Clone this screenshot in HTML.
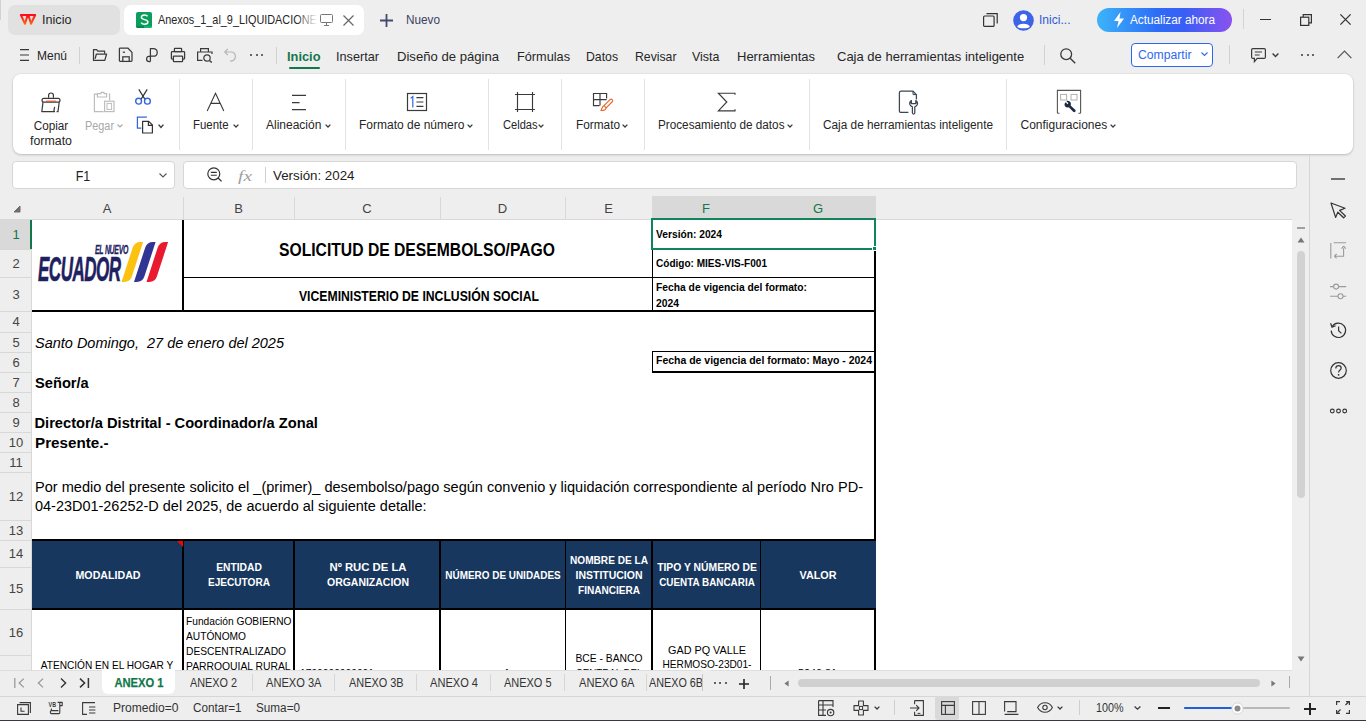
<!DOCTYPE html>
<html><head><meta charset="utf-8">
<style>
*{box-sizing:border-box;margin:0;padding:0}
html,body{width:1366px;height:721px;overflow:hidden;background:#eeeeee;font-family:"Liberation Sans",sans-serif;color:#262626;position:relative}
.a{position:absolute}
.t{position:absolute;white-space:pre;line-height:1}
svg{position:absolute;overflow:visible}
</style></head><body>
<div class="a" style="left:0px;top:0px;width:1px;height:20px;background:#d2d2d2;"></div>
<div class="a" style="left:8px;top:5px;width:112px;height:30px;background:#e1e1e1;border-radius:7px"></div>
<div class="a" style="left:124px;top:5px;width:240px;height:30px;background:#ffffff;border-radius:7px"></div>
<svg style="left:19px;top:13px;" width="18" height="13" viewBox="0 0 18 13"><defs><linearGradient id="wg" x1="0" y1="0" x2="0" y2="1"><stop offset="0" stop-color="#ff0a1e"/><stop offset="1" stop-color="#ff6210"/></linearGradient></defs><path d="M1.9 2 H8.6 L6 10.8 Z M9.4 2 H16.2 L12 10.8 Z" fill="none" stroke="url(#wg)" stroke-width="2" stroke-linejoin="round"/></svg>
<div class="t" id="t0" style="top:13.00px;font:normal normal 13px 'Liberation Sans';line-height:1;color:#262626;left:42px;transform:scaleX(0.9721);transform-origin:left top;">Inicio</div>
<div class="a" style="left:136px;top:12px;width:16px;height:16px;background:#0b9d5c;border-radius:2px;overflow:hidden"></div>
<div class="a" style="left:136px;top:26px;width:8px;height:2px;background:#07874b;border-radius:0 0 0 2px"></div>
<div class="a" style="left:144px;top:26px;width:8px;height:2px;background:#13b56a;border-radius:0 0 2px 0"></div>
<svg style="left:140px;top:14px;" width="9" height="11" viewBox="0 0 9 11"><path d="M7.6 2.2 C6.8 1.2 5.8 0.9 4.5 0.9 C2.6 0.9 1.4 1.9 1.4 3.2 C1.4 6.2 7.9 5 7.9 8 C7.9 9.5 6.5 10.2 4.6 10.2 C3 10.2 1.8 9.6 1.1 8.6" fill="none" stroke="#fff" stroke-width="1.5"/></svg>
<div class="t" id="t1" style="top:13.00px;font:normal normal 13px 'Liberation Sans';line-height:1;color:#262626;left:158px;transform:scaleX(0.8354);transform-origin:left top;">Anexos_1_al_9_LIQUIDACIONES</div>
<div class="a" style="left:296px;top:8px;width:24px;height:24px;background:linear-gradient(90deg,rgba(255,255,255,0),#fff 90%);"></div>
<div class="a" style="left:320px;top:8px;width:40px;height:24px;background:#fff;"></div>
<svg style="left:320px;top:14px;" width="13" height="12" viewBox="0 0 13 12"><rect x="0.5" y="0.5" width="12" height="8" rx="1" fill="none" stroke="#777" stroke-width="1"/><path d="M4 11.5 H9 M6.5 9 V11.5" stroke="#777" stroke-width="1"/></svg>
<svg style="left:343px;top:15px;" width="11" height="11" viewBox="0 0 11 11"><path d="M0.5 0.5 L10.5 10.5 M10.5 0.5 L0.5 10.5" stroke="#666" stroke-width="1.2"/></svg>
<svg style="left:380px;top:14px;" width="13" height="13" viewBox="0 0 13 13"><path d="M6.5 0 V13 M0 6.5 H13" stroke="#444b6a" stroke-width="1.8"/></svg>
<div class="t" id="t2" style="top:14.01px;font:normal normal 12.5px 'Liberation Sans';line-height:1;color:#3b4263;left:406px;transform:scaleX(0.9410);transform-origin:left top;">Nuevo</div>
<svg style="left:983px;top:13px;" width="15" height="14" viewBox="0 0 15 14"><rect x="0.6" y="3" width="10.5" height="10.4" rx="1" fill="none" stroke="#333" stroke-width="1.2"/><path d="M3.5 0.6 H14.2 V10.6" fill="none" stroke="#333" stroke-width="1.2"/></svg>
<svg style="left:1013px;top:10px;" width="21" height="21" viewBox="0 0 21 21"><circle cx="10.5" cy="10.5" r="10.3" fill="#3d63e6"/><circle cx="10.5" cy="7.6" r="3.6" fill="#fff"/><path d="M4.2 16.8 C5 12.6 16 12.6 16.8 16.8 C15 18.8 6 18.8 4.2 16.8Z" fill="#fff"/></svg>
<div class="t" id="t3" style="top:13.00px;font:normal normal 13px 'Liberation Sans';line-height:1;color:#3159d6;left:1039px;transform:scaleX(0.9277);transform-origin:left top;">Inici...</div>
<div class="a" style="left:1097px;top:8px;width:135px;height:24px;background:linear-gradient(90deg,#3cb4fa 0%,#2d6cf6 45%,#3a5ef5 65%,#8b52f0 100%);border-radius:12px"></div>
<svg style="left:1113px;top:12px;" width="12" height="16" viewBox="0 0 12 16"><path d="M7.5 0 L1 9 H5.5 L4 16 L11 6.5 H6.5 Z" fill="#fff"/></svg>
<div class="t" id="t4" style="top:14.01px;font:normal normal 12.5px 'Liberation Sans';line-height:1;color:#ffffff;left:1130px;transform:scaleX(0.9410);transform-origin:left top;">Actualizar ahora</div>
<div class="a" style="left:1243px;top:9px;width:1px;height:20px;background:#d4d4d4;"></div>
<div class="a" style="left:1260px;top:19px;width:11px;height:1.2px;background:#333;"></div>
<svg style="left:1300px;top:14px;" width="12" height="12" viewBox="0 0 12 12"><rect x="0.6" y="3.2" width="8.2" height="8.2" fill="none" stroke="#333" stroke-width="1.2"/><path d="M3.2 3.2 V0.6 H11.4 V8.8 H8.8" fill="none" stroke="#333" stroke-width="1.2"/></svg>
<svg style="left:1340px;top:14px;" width="11" height="11" viewBox="0 0 11 11"><path d="M0.4 0.4 L10.6 10.6 M10.6 0.4 L0.4 10.6" stroke="#333" stroke-width="1.3"/></svg>
<svg style="left:20px;top:49px;" width="9" height="12" viewBox="0 0 9 12"><path d="M0 0.6 H9 M0 6 H9 M0 11.4 H9" stroke="#3a3a3a" stroke-width="1.2"/></svg>
<div class="t" id="t5" style="top:49.00px;font:normal normal 13px 'Liberation Sans';line-height:1;color:#262626;left:37px;transform:scaleX(0.9225);transform-origin:left top;">Menú</div>
<div class="a" style="left:79px;top:47px;width:1px;height:17px;background:#d2d2d2;"></div>
<svg style="left:92px;top:48px;" width="16" height="14" viewBox="0 0 16 14"><path d="M1.5 12.4 V1.5 H4.6 L5.8 3.2 H12.6 V4.8 M1.5 12.4 H12.8 L14.6 6 H4.4 L3.2 10.4" fill="none" stroke="#3a3a3a" stroke-width="1.25" stroke-linejoin="round" stroke-linecap="round"/></svg>
<svg style="left:118px;top:47px;" width="16" height="16" viewBox="0 0 16 16"><path d="M5 14.4 H2.2 C1.6 14.4 1.4 14.2 1.4 13.6 V1.8 C1.4 1.3 1.6 1 2.2 1 H9.8 L14 5.4 V13.6 C14 14.2 13.8 14.4 13.2 14.4 H10.8" fill="none" stroke="#3a3a3a" stroke-width="1.25" stroke-linejoin="round"/><path d="M4.8 5.2 H7" stroke="#3a3a3a" stroke-width="1.25"/><rect x="4.8" y="9.8" width="6.4" height="4.6" fill="none" stroke="#3a3a3a" stroke-width="1.25"/></svg>
<svg style="left:145px;top:47px;" width="14" height="16" viewBox="0 0 14 16"><path d="M5.4 14.6 V1.5 H8.2 C10.6 1.5 12.2 3.2 12.2 5.4 C12.2 7.6 10.6 9.2 8.2 9.2 H5.6 C3.2 9.2 1.6 10.4 1.6 12 C1.6 13.6 2.8 14.6 4.2 14.6 H5.4" fill="none" stroke="#3a3a3a" stroke-width="1.25" stroke-linejoin="round"/></svg>
<svg style="left:170px;top:47px;" width="16" height="16" viewBox="0 0 16 16"><rect x="4.4" y="1.4" width="7.2" height="3.2" rx="0.6" fill="none" stroke="#3a3a3a" stroke-width="1.25"/><path d="M3.2 12 H2.2 C1.7 12 1.4 11.7 1.4 11.2 V5.4 C1.4 4.9 1.7 4.6 2.2 4.6 H13.8 C14.3 4.6 14.6 4.9 14.6 5.4 V11.2 C14.6 11.7 14.3 12 13.8 12 H12.8" fill="none" stroke="#3a3a3a" stroke-width="1.25"/><rect x="3.4" y="9" width="9.2" height="5.6" rx="0.6" fill="none" stroke="#3a3a3a" stroke-width="1.25"/></svg>
<svg style="left:197px;top:48px;" width="16" height="15" viewBox="0 0 16 15"><path d="M3.6 4 V0.6 H11.4 V4" fill="none" stroke="#3a3a3a" stroke-width="1.2"/><path d="M5.5 12.4 H0.6 V4 H15 V6" fill="none" stroke="#3a3a3a" stroke-width="1.2"/><circle cx="10" cy="10" r="3.2" fill="none" stroke="#3a3a3a" stroke-width="1.2"/><path d="M12.4 12.4 L14.8 14.6" stroke="#3a3a3a" stroke-width="1.3"/></svg>
<svg style="left:224px;top:48px;" width="12" height="14" viewBox="0 0 12 14"><path d="M3.8 0.8 L0.8 4 L3.8 7.2 M0.9 4 H6.5 C9.8 4 11.4 6 11.4 8.6 C11.4 11.4 9 13.2 6 13.2" fill="none" stroke="#b5b5b5" stroke-width="1.2"/></svg>
<div class="a" style="left:250px;top:54px;width:2px;height:2px;background:#3a3a3a;border-radius:1px"></div>
<div class="a" style="left:255.5px;top:54px;width:2px;height:2px;background:#3a3a3a;border-radius:1px"></div>
<div class="a" style="left:261px;top:54px;width:2px;height:2px;background:#3a3a3a;border-radius:1px"></div>
<div class="a" style="left:276px;top:47px;width:1px;height:17px;background:#d2d2d2;"></div>
<div class="t" id="t6" style="top:50.00px;font:normal bold 13px 'Liberation Sans';line-height:1;color:#12774a;left:287px;transform:scaleX(0.9868);transform-origin:left top;">Inicio</div>
<div class="t" id="t7" style="top:50.00px;font:normal normal 13px 'Liberation Sans';line-height:1;color:#262626;left:336px;transform:scaleX(0.9757);transform-origin:left top;">Insertar</div>
<div class="t" id="t8" style="top:50.00px;font:normal normal 13px 'Liberation Sans';line-height:1;color:#262626;left:397px;transform:scaleX(1.0080);transform-origin:left top;">Diseño de página</div>
<div class="t" id="t9" style="top:50.00px;font:normal normal 13px 'Liberation Sans';line-height:1;color:#262626;left:517px;transform:scaleX(0.9783);transform-origin:left top;">Fórmulas</div>
<div class="t" id="t10" style="top:50.00px;font:normal normal 13px 'Liberation Sans';line-height:1;color:#262626;left:586px;transform:scaleX(0.9423);transform-origin:left top;">Datos</div>
<div class="t" id="t11" style="top:50.00px;font:normal normal 13px 'Liberation Sans';line-height:1;color:#262626;left:634.5px;transform:scaleX(0.9418);transform-origin:left top;">Revisar</div>
<div class="t" id="t12" style="top:50.00px;font:normal normal 13px 'Liberation Sans';line-height:1;color:#262626;left:692px;transform:scaleX(0.9593);transform-origin:left top;">Vista</div>
<div class="t" id="t13" style="top:50.00px;font:normal normal 13px 'Liberation Sans';line-height:1;color:#262626;left:737px;">Herramientas</div>
<div class="t" id="t14" style="top:50.00px;font:normal normal 13px 'Liberation Sans';line-height:1;color:#262626;left:837px;">Caja de herramientas inteligente</div>
<div class="a" style="left:289px;top:67px;width:31px;height:2px;background:#12774a;border-radius:1px"></div>
<div class="a" style="left:1044px;top:45px;width:1px;height:20px;background:#d2d2d2;"></div>
<svg style="left:1060px;top:48px;" width="16" height="16" viewBox="0 0 16 16"><circle cx="6.2" cy="6.2" r="5.4" fill="none" stroke="#3a3a3a" stroke-width="1.3"/><path d="M10.2 10.2 L15.2 15.2" stroke="#3a3a3a" stroke-width="1.4"/></svg>
<div class="a" style="left:1131px;top:43px;width:82px;height:24px;background:#ffffff;border:1.2px solid #2f68ec;border-radius:4px"></div>
<div class="t" id="t15" style="top:49.01px;font:normal normal 12.5px 'Liberation Sans';line-height:1;color:#2f68ec;left:1137.5px;transform:scaleX(0.9750);transform-origin:left top;">Compartir</div>
<svg style="left:1201px;top:52px;" width="7" height="5" viewBox="0 0 7 5"><path d="M0.5 0.5 L3.5 3.5 L6.5 0.5" fill="none" stroke="#2f68ec" stroke-width="1.1"/></svg>
<div class="a" style="left:1229px;top:45px;width:1px;height:19px;background:#d2d2d2;"></div>
<svg style="left:1251px;top:48px;" width="15" height="15" viewBox="0 0 15 15"><path d="M1.8 0.6 H13.2 C13.9 0.6 14.4 1.1 14.4 1.8 V9.2 C14.4 9.9 13.9 10.4 13.2 10.4 H6.2 L3.4 13.6 V10.4 H1.8 C1.1 10.4 0.6 9.9 0.6 9.2 V1.8 C0.6 1.1 1.1 0.6 1.8 0.6Z" fill="none" stroke="#3a3a3a" stroke-width="1.2"/><path d="M3.8 4 H11 M3.8 7 H8.6" stroke="#3a3a3a" stroke-width="1.2"/></svg>
<svg style="left:1272px;top:53px;" width="7" height="5" viewBox="0 0 7 5"><path d="M0.6 0.6 L3.5 3.6 L6.4 0.6" fill="none" stroke="#3a3a3a" stroke-width="1.4"/></svg>
<div class="a" style="left:1301px;top:54px;width:2px;height:2px;background:#3a3a3a;border-radius:1px"></div>
<div class="a" style="left:1306.5px;top:54px;width:2px;height:2px;background:#3a3a3a;border-radius:1px"></div>
<div class="a" style="left:1312px;top:54px;width:2px;height:2px;background:#3a3a3a;border-radius:1px"></div>
<svg style="left:1337px;top:50px;" width="15" height="9" viewBox="0 0 15 9"><path d="M0.6 8.2 L7.5 1 L14.4 8.2" fill="none" stroke="#555" stroke-width="1.2"/></svg>
<div class="a" style="left:13px;top:74px;width:1340px;height:80px;background:#ffffff;border-radius:8px;box-shadow:0 1px 2.5px rgba(0,0,0,.20), 0 0 0 0.5px rgba(0,0,0,.05)"></div>
<div class="a" style="left:179px;top:79px;width:1px;height:71px;background:#e3e3e3;"></div>
<div class="a" style="left:252px;top:79px;width:1px;height:71px;background:#e3e3e3;"></div>
<div class="a" style="left:345px;top:79px;width:1px;height:71px;background:#e3e3e3;"></div>
<div class="a" style="left:488px;top:79px;width:1px;height:71px;background:#e3e3e3;"></div>
<div class="a" style="left:561px;top:79px;width:1px;height:71px;background:#e3e3e3;"></div>
<div class="a" style="left:644px;top:79px;width:1px;height:71px;background:#e3e3e3;"></div>
<div class="a" style="left:809px;top:79px;width:1px;height:71px;background:#e3e3e3;"></div>
<div class="a" style="left:1006px;top:79px;width:1px;height:71px;background:#e3e3e3;"></div>
<svg style="left:40px;top:91px;" width="22" height="22" viewBox="0 0 22 22"><path d="M8.6 6.8 V4.2 C8.6 3.2 9.4 2 11 2 C12.6 2 13.4 3.2 13.4 4.2 V6.8" fill="none" stroke="#3a3a3a" stroke-width="1.2"/><rect x="2" y="7.4" width="18" height="3.8" rx="1.9" fill="#fff" stroke="#3a3a3a" stroke-width="1.2"/><path d="M6 10.2 H16" stroke="#e4572e" stroke-width="1.2"/><path d="M3 11.2 L1.8 20.6 H15 M19.2 11.2 L18 20.6 H16.6 M14.6 15.8 L13.8 20.6" fill="none" stroke="#3a3a3a" stroke-width="1.2" stroke-linejoin="round"/></svg>
<svg style="left:93px;top:91px;" width="23" height="22" viewBox="0 0 23 22"><path d="M4.2 3.2 H1.4 V20.6 H10.6 M15.8 3.2 H16.6 V9.6" fill="none" stroke="#bdbdbd" stroke-width="1.2"/><path d="M4.4 6 V2.6 H8 V1.4 H11 V2.6 H13.6 V6 Z" fill="none" stroke="#bdbdbd" stroke-width="1.2" stroke-linejoin="round"/><rect x="11.6" y="10.2" width="9.4" height="10.4" fill="none" stroke="#bdbdbd" stroke-width="1.2"/><rect x="14" y="12.4" width="4.6" height="6" fill="none" stroke="#bdbdbd" stroke-width="1"/></svg>
<div class="t" id="t16" style="top:120.01px;font:normal normal 12px 'Liberation Sans';line-height:1;color:#262626;left:-549.5px;width:1200px;text-align:center;transform:scaleX(0.9760);transform-origin:center top;">Copiar</div>
<div class="t" id="t17" style="top:135.01px;font:normal normal 12px 'Liberation Sans';line-height:1;color:#262626;left:-549.5px;width:1200px;text-align:center;transform:scaleX(1.0324);transform-origin:center top;">formato</div>
<div class="t" id="t18" style="top:120.01px;font:normal normal 12px 'Liberation Sans';line-height:1;color:#a8a8a8;left:84.5px;transform:scaleX(0.9056);transform-origin:left top;">Pegar</div>
<svg style="left:117px;top:124px;" width="6" height="4" viewBox="0 0 6 4"><path d="M0.5 0.5 L3 3 L5.5 0.5" fill="none" stroke="#a8a8a8" stroke-width="1.1"/></svg>
<svg style="left:134px;top:89px;" width="18" height="16" viewBox="0 0 18 16"><path d="M4.8 0.4 L11 10.4 M13.2 0.4 L7 10.4" stroke="#333" stroke-width="1.2"/><circle cx="4.6" cy="12.2" r="2.9" fill="none" stroke="#3366e0" stroke-width="1.4"/><circle cx="13.4" cy="12.2" r="2.9" fill="none" stroke="#3366e0" stroke-width="1.4"/></svg>
<svg style="left:136px;top:116px;" width="18" height="18" viewBox="0 0 18 18"><path d="M10.4 1.6 V1 H1.4 V12 H5.4" fill="none" stroke="#3366e0" stroke-width="1.25"/><path d="M6.6 5.4 H12.8 L16.4 9 V17 H6.6 Z" fill="#fff" stroke="#333" stroke-width="1.2" stroke-linejoin="round"/><path d="M12.4 5.4 V9.4 H16.4" fill="none" stroke="#333" stroke-width="1.2"/></svg>
<svg style="left:158px;top:124px;" width="6" height="5" viewBox="0 0 6 5"><path d="M0.6 0.6 L3 3.4 L5.4 0.6" fill="none" stroke="#3a3a3a" stroke-width="1.4"/></svg>
<svg style="left:206px;top:92px;" width="19" height="20" viewBox="0 0 19 20"><path d="M1.2 19 L9.5 1.2 L17.8 19 M4.8 11.4 H14.2" fill="none" stroke="#3a3a3a" stroke-width="1.1"/></svg>
<div class="t" id="t19" style="top:119.01px;font:normal normal 12px 'Liberation Sans';line-height:1;color:#262626;left:193px;transform:scaleX(0.9502);transform-origin:left top;">Fuente</div>
<svg style="left:233px;top:124px;" width="6" height="4" viewBox="0 0 6 4"><path d="M0.6 0.6 L3 3 L5.4 0.6" fill="none" stroke="#3a3a3a" stroke-width="1.3"/></svg>
<svg style="left:291px;top:93px;" width="16" height="18" viewBox="0 0 16 18"><path d="M1 2.4 H15 M1 9.6 H8.6 M1 16.6 H15" stroke="#3a3a3a" stroke-width="1.15"/></svg>
<div class="t" id="t20" style="top:119.01px;font:normal normal 12px 'Liberation Sans';line-height:1;color:#262626;left:266px;">Alineación</div>
<svg style="left:325px;top:124px;" width="6" height="4" viewBox="0 0 6 4"><path d="M0.6 0.6 L3 3 L5.4 0.6" fill="none" stroke="#3a3a3a" stroke-width="1.3"/></svg>
<svg style="left:406px;top:92px;" width="22" height="20" viewBox="0 0 22 20"><rect x="1.5" y="1.5" width="19" height="17" fill="none" stroke="#3a3a3a" stroke-width="1.2"/><path d="M4.6 6.4 L6.8 4.6 V15.4" fill="none" stroke="#3366e0" stroke-width="1.2"/><path d="M10.4 5.6 H17.4 M10.4 10 H17.4 M10.4 14.4 H17.4" stroke="#3a3a3a" stroke-width="1.1"/></svg>
<div class="t" id="t21" style="top:119.01px;font:normal normal 12px 'Liberation Sans';line-height:1;color:#262626;left:359px;">Formato de número</div>
<svg style="left:467px;top:124px;" width="6" height="4" viewBox="0 0 6 4"><path d="M0.6 0.6 L3 3 L5.4 0.6" fill="none" stroke="#3a3a3a" stroke-width="1.3"/></svg>
<svg style="left:515px;top:92px;" width="20" height="20" viewBox="0 0 20 20"><path d="M2.5 0 V20 M17.5 0 V20 M0 2.5 H20 M0 17.5 H20" stroke="#3a3a3a" stroke-width="1.15"/></svg>
<div class="t" id="t22" style="top:119.01px;font:normal normal 12px 'Liberation Sans';line-height:1;color:#262626;left:502.5px;transform:scaleX(0.9236);transform-origin:left top;">Celdas</div>
<svg style="left:538px;top:124px;" width="6" height="4" viewBox="0 0 6 4"><path d="M0.6 0.6 L3 3 L5.4 0.6" fill="none" stroke="#3a3a3a" stroke-width="1.3"/></svg>
<svg style="left:592px;top:92px;" width="22" height="20" viewBox="0 0 22 20"><path d="M7.4 13.6 H1.5 V1.5 H14.6 V6.4 M1.5 7.6 H14.6 M8 1.5 V13.6" fill="none" stroke="#3a3a3a" stroke-width="1.15"/><path d="M20.2 7.6 C21 8.4 20.8 9.2 20 10 L14.2 15.8 L12 13.6 L17.8 7.8 C18.6 7 19.4 6.8 20.2 7.6Z M12 13.6 C10.4 14 10.2 16.4 9 18.4 C11 18.6 13.6 18.2 14.2 15.8" fill="none" stroke="#e4682e" stroke-width="1.15" stroke-linejoin="round"/></svg>
<div class="t" id="t23" style="top:119.01px;font:normal normal 12px 'Liberation Sans';line-height:1;color:#262626;left:575.5px;transform:scaleX(0.9848);transform-origin:left top;">Formato</div>
<svg style="left:622px;top:124px;" width="6" height="4" viewBox="0 0 6 4"><path d="M0.6 0.6 L3 3 L5.4 0.6" fill="none" stroke="#3a3a3a" stroke-width="1.3"/></svg>
<svg style="left:717px;top:92px;" width="19" height="20" viewBox="0 0 19 20"><path d="M18 2.8 V1.2 H1.4 L9.8 10 L1.4 18.8 H18 V17.2" fill="none" stroke="#3a3a3a" stroke-width="1.15" stroke-linejoin="miter"/></svg>
<div class="t" id="t24" style="top:119.01px;font:normal normal 12px 'Liberation Sans';line-height:1;color:#262626;left:658px;transform:scaleX(0.9775);transform-origin:left top;">Procesamiento de datos</div>
<svg style="left:787px;top:124px;" width="6" height="4" viewBox="0 0 6 4"><path d="M0.6 0.6 L3 3 L5.4 0.6" fill="none" stroke="#3a3a3a" stroke-width="1.3"/></svg>
<svg style="left:898px;top:90px;" width="22" height="25" viewBox="0 0 22 25"><path d="M10.4 22.4 H3 C2 22.4 1.4 21.8 1.4 20.8 V2.8 C1.4 1.8 2 1.2 3 1.2 H15 L18.4 4.6 V9.4" fill="none" stroke="#3c4655" stroke-width="1.25" stroke-linejoin="round"/><path d="M15 1.2 V4.6 H18.4" fill="none" stroke="#3c4655" stroke-width="1"/><path d="M13.4 10.6 C11.8 11.6 11.4 13.2 12 14.8 C12.6 16 13.6 16.6 14.4 16.8 V22.8 C14.4 23.6 14.8 24 15.6 24 C16.4 24 16.8 23.6 16.8 22.8 V16.8 C17.6 16.6 18.6 16 19.2 14.8 C19.8 13.2 19.4 11.6 17.8 10.6 V13.6 H13.4 Z" fill="none" stroke="#3c4655" stroke-width="1.25" stroke-linejoin="round"/></svg>
<div class="t" id="t25" style="top:119.01px;font:normal normal 12px 'Liberation Sans';line-height:1;color:#262626;left:823px;transform:scaleX(0.9840);transform-origin:left top;">Caja de herramientas inteligente</div>
<svg style="left:1056px;top:89px;" width="26" height="26" viewBox="0 0 26 26"><path d="M1.4 24.2 V1.4 H24.6 V24.2 M1.4 24.2 H3.6 M24.6 24.2 H22.4" fill="none" stroke="#555" stroke-width="1.1"/><rect x="4.6" y="5.4" width="6" height="5.6" fill="none" stroke="#b0b0b0" stroke-width="1"/><rect x="15" y="5.4" width="6" height="5.6" fill="none" stroke="#b0b0b0" stroke-width="1"/><path d="M9.6 13.2 C8.4 14.4 8.2 16.2 9.2 17.6 C10.2 18.6 11.8 18.8 12.8 18.2 L17.2 22.8 C17.8 23.4 18.6 23.4 19.2 22.8 C19.8 22.2 19.8 21.4 19.2 20.8 L14.6 16.4 C15.2 15.2 15 13.8 14 12.8 C13 11.8 11.4 11.6 10.4 12.2 L12.4 14.2 L11.6 15.2 Z" fill="#1e2a40"/></svg>
<div class="t" id="t26" style="top:119.01px;font:normal normal 12px 'Liberation Sans';line-height:1;color:#262626;left:1020.5px;">Configuraciones</div>
<svg style="left:1110px;top:124px;" width="6" height="4" viewBox="0 0 6 4"><path d="M0.6 0.6 L3 3 L5.4 0.6" fill="none" stroke="#3a3a3a" stroke-width="1.3"/></svg>
<div class="a" style="left:12px;top:161px;width:163px;height:28px;background:#ffffff;border:1px solid #d6d6d6;border-radius:4px"></div>
<div class="t" id="t27" style="top:168.00px;font:normal normal 15.5px 'Liberation Sans';line-height:1;color:#222;left:-517px;width:1200px;text-align:center;transform:scaleX(0.8016);transform-origin:center top;">F1</div>
<svg style="left:159px;top:173px;" width="8" height="5" viewBox="0 0 8 5"><path d="M0.5 0.5 L4 4 L7.5 0.5" fill="none" stroke="#555" stroke-width="1.1"/></svg>
<div class="a" style="left:183px;top:161px;width:1114px;height:28px;background:#ffffff;border:1px solid #d6d6d6;border-radius:4px"></div>
<svg style="left:207px;top:167px;" width="16" height="15" viewBox="0 0 16 15"><circle cx="6.8" cy="6.8" r="6" fill="none" stroke="#333" stroke-width="1.2"/><path d="M3.8 5.4 H9.8 M3.8 8.2 H9.8" stroke="#333" stroke-width="1.1"/><path d="M11 11 L14.6 14.4" stroke="#333" stroke-width="1.3"/></svg>
<div class="t" id="t28" style="top:169.01px;font:italic normal 15px 'Liberation Serif';line-height:1;color:#a0a0a0;left:238px;transform:scaleX(1.2933);transform-origin:left top;">fx</div>
<div class="a" style="left:265px;top:167px;width:1px;height:16px;background:#d0d0d0;"></div>
<div class="t" id="t29" style="top:169.00px;font:normal normal 13px 'Liberation Sans';line-height:1;color:#222;left:273px;transform:scaleX(1.0251);transform-origin:left top;">Versión: 2024</div>
<div class="a" style="left:1309px;top:155px;width:1px;height:541px;background:#d6d6d6;"></div>
<div class="a" style="left:1331px;top:178px;width:14px;height:2px;background:#707070;"></div>
<svg style="left:1330px;top:202px;" width="17" height="17" viewBox="0 0 17 17"><path d="M1 1 L15 6.2 L9.6 8.4 L15.4 14 L13.6 15.8 L7.8 10.2 L5.6 15.4 Z" fill="none" stroke="#333" stroke-width="1.2" stroke-linejoin="round"/></svg>
<svg style="left:1330px;top:242px;" width="17" height="18" viewBox="0 0 17 18"><path d="M0.8 1 V16.4 M3.6 0.8 H16" stroke="#9a9a9a" stroke-width="1.1"/><path d="M13.6 6.2 V14.2 H4.4 M13.6 4.2 L11.6 6.6 M13.6 4.2 L15.8 6.6 M4.4 14.2 L6.6 12 M4.4 14.2 L6.6 16.4" fill="none" stroke="#9a9a9a" stroke-width="1.1"/></svg>
<svg style="left:1330px;top:283px;" width="17" height="17" viewBox="0 0 17 17"><path d="M0 3.6 H3.6 M8.6 3.6 H16.2 M0 13.2 H8 M13 13.2 H16.2" stroke="#9a9a9a" stroke-width="1.1"/><circle cx="6.1" cy="3.6" r="2.5" fill="none" stroke="#9a9a9a" stroke-width="1.1"/><circle cx="10.5" cy="13.2" r="2.5" fill="none" stroke="#9a9a9a" stroke-width="1.1"/></svg>
<svg style="left:1330px;top:322px;" width="17" height="17" viewBox="0 0 17 17"><path d="M2.2 4.6 A7.2 7.2 0 1 1 1.2 8.6" fill="none" stroke="#333" stroke-width="1.2"/><path d="M0.6 1.2 L2 5.2 L5.6 3.8" fill="none" stroke="#333" stroke-width="1.2"/><path d="M8.6 4.6 V8.8 L11.4 11.4" fill="none" stroke="#333" stroke-width="1.2"/></svg>
<svg style="left:1330px;top:362px;" width="17" height="17" viewBox="0 0 17 17"><circle cx="8.5" cy="8.5" r="7.8" fill="none" stroke="#333" stroke-width="1.2"/><path d="M5.8 6.4 C5.8 4.4 7 3.6 8.5 3.6 C10.1 3.6 11.2 4.6 11.2 6 C11.2 7.8 8.6 8.2 8.6 10.4" fill="none" stroke="#333" stroke-width="1.2"/><circle cx="8.6" cy="12.8" r="0.9" fill="#333"/></svg>
<svg style="left:1330px;top:407px;" width="17" height="8" viewBox="0 0 17 8"><circle cx="2.3" cy="4" r="1.9" fill="none" stroke="#333" stroke-width="1.1"/><circle cx="8.5" cy="4" r="1.9" fill="none" stroke="#333" stroke-width="1.1"/><circle cx="14.7" cy="4" r="1.9" fill="none" stroke="#333" stroke-width="1.1"/></svg>
<div class="a" style="left:0px;top:196px;width:1309px;height:23px;background:#eeeeee;"></div>
<div class="a" style="left:0px;top:219px;width:1292px;height:1px;background:#d8d8d8;"></div>
<div class="a" style="left:652px;top:196px;width:224px;height:23px;background:#d9d9d9;"></div>
<div class="a" style="left:183px;top:197px;width:1px;height:22px;background:#d8d8d8;"></div>
<div class="a" style="left:294px;top:197px;width:1px;height:22px;background:#d8d8d8;"></div>
<div class="a" style="left:440px;top:197px;width:1px;height:22px;background:#d8d8d8;"></div>
<div class="a" style="left:565px;top:197px;width:1px;height:22px;background:#d8d8d8;"></div>
<svg style="left:13px;top:205px;" width="8" height="8" viewBox="0 0 8 8"><path d="M7 1 V7 H1 Z" fill="#6e6e6e" stroke="#6e6e6e" stroke-width="1" stroke-linejoin="round"/></svg>
<div class="t" id="t30" style="top:202.00px;font:normal normal 13px 'Liberation Sans';line-height:1;color:#444;left:-493px;width:1200px;text-align:center;">A</div>
<div class="t" id="t31" style="top:202.00px;font:normal normal 13px 'Liberation Sans';line-height:1;color:#444;left:-361.5px;width:1200px;text-align:center;">B</div>
<div class="t" id="t32" style="top:202.00px;font:normal normal 13px 'Liberation Sans';line-height:1;color:#444;left:-233px;width:1200px;text-align:center;">C</div>
<div class="t" id="t33" style="top:202.00px;font:normal normal 13px 'Liberation Sans';line-height:1;color:#444;left:-97.5px;width:1200px;text-align:center;">D</div>
<div class="t" id="t34" style="top:202.00px;font:normal normal 13px 'Liberation Sans';line-height:1;color:#444;left:8.5px;width:1200px;text-align:center;">E</div>
<div class="t" id="t35" style="top:202.00px;font:normal normal 13px 'Liberation Sans';line-height:1;color:#12774a;left:106px;width:1200px;text-align:center;">F</div>
<div class="t" id="t36" style="top:202.00px;font:normal normal 13px 'Liberation Sans';line-height:1;color:#12774a;left:218px;width:1200px;text-align:center;">G</div>
<div class="a" style="left:0px;top:220px;width:31px;height:450px;background:#eeeeee;"></div>
<div class="a" style="left:31px;top:220px;width:1px;height:450px;background:#d8d8d8;"></div>
<div class="a" style="left:0px;top:220px;width:30px;height:29px;background:#d9d9d9;"></div>
<div class="a" style="left:30px;top:220px;width:2px;height:29px;background:#12774a;"></div>
<div class="t" id="t37" style="top:228.10px;font:normal normal 13px 'Liberation Sans';line-height:1;color:#12774a;left:-584px;width:1200px;text-align:center;">1</div>
<div class="a" style="left:0px;top:249px;width:31px;height:1px;background:#d8d8d8;"></div>
<div class="t" id="t38" style="top:256.60px;font:normal normal 13px 'Liberation Sans';line-height:1;color:#444;left:-584px;width:1200px;text-align:center;">2</div>
<div class="a" style="left:0px;top:277px;width:31px;height:1px;background:#d8d8d8;"></div>
<div class="t" id="t39" style="top:287.60px;font:normal normal 13px 'Liberation Sans';line-height:1;color:#444;left:-584px;width:1200px;text-align:center;">3</div>
<div class="a" style="left:0px;top:311px;width:31px;height:1px;background:#d8d8d8;"></div>
<div class="t" id="t40" style="top:315.10px;font:normal normal 13px 'Liberation Sans';line-height:1;color:#444;left:-584px;width:1200px;text-align:center;">4</div>
<div class="a" style="left:0px;top:332px;width:31px;height:1px;background:#d8d8d8;"></div>
<div class="t" id="t41" style="top:335.60px;font:normal normal 13px 'Liberation Sans';line-height:1;color:#444;left:-584px;width:1200px;text-align:center;">5</div>
<div class="a" style="left:0px;top:352px;width:31px;height:1px;background:#d8d8d8;"></div>
<div class="t" id="t42" style="top:355.60px;font:normal normal 13px 'Liberation Sans';line-height:1;color:#444;left:-584px;width:1200px;text-align:center;">6</div>
<div class="a" style="left:0px;top:372px;width:31px;height:1px;background:#d8d8d8;"></div>
<div class="t" id="t43" style="top:375.60px;font:normal normal 13px 'Liberation Sans';line-height:1;color:#444;left:-584px;width:1200px;text-align:center;">7</div>
<div class="a" style="left:0px;top:392px;width:31px;height:1px;background:#d8d8d8;"></div>
<div class="t" id="t44" style="top:395.60px;font:normal normal 13px 'Liberation Sans';line-height:1;color:#444;left:-584px;width:1200px;text-align:center;">8</div>
<div class="a" style="left:0px;top:412px;width:31px;height:1px;background:#d8d8d8;"></div>
<div class="t" id="t45" style="top:415.60px;font:normal normal 13px 'Liberation Sans';line-height:1;color:#444;left:-584px;width:1200px;text-align:center;">9</div>
<div class="a" style="left:0px;top:432px;width:31px;height:1px;background:#d8d8d8;"></div>
<div class="t" id="t46" style="top:435.60px;font:normal normal 13px 'Liberation Sans';line-height:1;color:#444;left:-584px;width:1200px;text-align:center;">10</div>
<div class="a" style="left:0px;top:452px;width:31px;height:1px;background:#d8d8d8;"></div>
<div class="t" id="t47" style="top:455.60px;font:normal normal 13px 'Liberation Sans';line-height:1;color:#444;left:-584px;width:1200px;text-align:center;">11</div>
<div class="a" style="left:0px;top:472px;width:31px;height:1px;background:#d8d8d8;"></div>
<div class="t" id="t48" style="top:489.60px;font:normal normal 13px 'Liberation Sans';line-height:1;color:#444;left:-584px;width:1200px;text-align:center;">12</div>
<div class="a" style="left:0px;top:520px;width:31px;height:1px;background:#d8d8d8;"></div>
<div class="t" id="t49" style="top:523.60px;font:normal normal 13px 'Liberation Sans';line-height:1;color:#444;left:-584px;width:1200px;text-align:center;">13</div>
<div class="a" style="left:0px;top:540px;width:31px;height:1px;background:#d8d8d8;"></div>
<div class="t" id="t50" style="top:547.10px;font:normal normal 13px 'Liberation Sans';line-height:1;color:#444;left:-584px;width:1200px;text-align:center;">14</div>
<div class="a" style="left:0px;top:567px;width:31px;height:1px;background:#d8d8d8;"></div>
<div class="t" id="t51" style="top:581.60px;font:normal normal 13px 'Liberation Sans';line-height:1;color:#444;left:-584px;width:1200px;text-align:center;">15</div>
<div class="a" style="left:0px;top:609px;width:31px;height:1px;background:#d8d8d8;"></div>
<div class="t" id="t52" style="top:625.60px;font:normal normal 13px 'Liberation Sans';line-height:1;color:#444;left:-584px;width:1200px;text-align:center;">16</div>
<div class="a" style="left:0px;top:655px;width:31px;height:1px;background:#d8d8d8;"></div>
<div class="a" style="left:32px;top:220px;width:1260px;height:450px;background:#ffffff;"></div>
<div class="a" style="left:1292px;top:220px;width:17px;height:450px;background:#efefef;"></div>
<div class="a" style="left:1297px;top:226.5px;width:8px;height:2px;background:#a0a0a0;"></div>
<svg style="left:1297px;top:237px;" width="8" height="6" viewBox="0 0 8 6"><path d="M4 0.5 L7.5 5.5 H0.5Z" fill="#777"/></svg>
<div class="a" style="left:1297px;top:251px;width:8px;height:247px;background:#d2d2d2;border-radius:4px"></div>
<svg style="left:1297px;top:656px;" width="8" height="6" viewBox="0 0 8 6"><path d="M0.5 0.5 H7.5 L4 5.5Z" fill="#777"/></svg>
<div class="a" style="left:182px;top:220px;width:2px;height:91px;background:#000;"></div>
<div class="a" style="left:183px;top:277px;width:470px;height:1px;background:#000;"></div>
<div class="a" style="left:652px;top:249px;width:1px;height:62px;background:#000;"></div>
<div class="a" style="left:652px;top:277px;width:223px;height:1px;background:#000;"></div>
<div class="a" style="left:652px;top:249px;width:223px;height:1px;background:#000;"></div>
<div class="a" style="left:32px;top:310px;width:844px;height:2px;background:#000;"></div>
<div class="a" style="left:874px;top:220px;width:2px;height:450px;background:#000;"></div>
<div class="a" style="left:652px;top:351px;width:223px;height:1px;background:#000;"></div>
<div class="a" style="left:652px;top:351px;width:1px;height:21px;background:#000;"></div>
<div class="a" style="left:652px;top:371px;width:223px;height:2px;background:#000;"></div>
<svg style="left:36px;top:240px;" width="136" height="44" viewBox="0 0 136 44"><path d="M107.1 2 L95.95 36.29 Q94.10 42 88.10 42 H85.5 L96.65 7.71 Q98.5 2 104.5 2 Z" fill="#fcc20f"/><path d="M119.6 2 L108.45 36.29 Q106.60 42 100.60 42 H98 L109.15 7.71 Q111 2 117 2 Z" fill="#303593"/><path d="M132.1 2 L120.95 36.29 Q119.10 42 113.10 42 H110.5 L121.65 7.71 Q123.5 2 129.5 2 Z" fill="#e9192f"/></svg>
<div class="t" id="t53" style="top:251.01px;font:italic bold 35px 'Liberation Sans';line-height:1;color:#1e2160;left:38px;transform:scaleX(0.4860);transform-origin:left top;letter-spacing:-1px;-webkit-text-stroke:0.6px #1e2160;">ECUADOR</div>
<div class="t" id="t54" style="top:242.50px;font:italic bold 13px 'Liberation Sans';line-height:1;color:#1e2160;left:94.5px;transform:scaleX(0.5342);transform-origin:left top;letter-spacing:-0.5px;-webkit-text-stroke:0.3px #1e2160;">EL NUEVO</div>
<div class="t" id="t55" style="top:240.60px;font:normal bold 18.8px 'Liberation Sans';line-height:1;color:#000;left:-183px;width:1200px;text-align:center;transform:scaleX(0.8353);transform-origin:center top;">SOLICITUD DE DESEMBOLSO/PAGO</div>
<div class="t" id="t56" style="top:288.51px;font:normal bold 14.4px 'Liberation Sans';line-height:1;color:#000;left:-181.5px;width:1200px;text-align:center;transform:scaleX(0.8480);transform-origin:center top;">VICEMINISTERIO DE INCLUSIÓN SOCIAL</div>
<div class="t" id="t57" style="top:229.01px;font:normal bold 11.3px 'Liberation Sans';line-height:1;color:#000;left:655.6px;transform:scaleX(0.9060);transform-origin:left top;">Versión: 2024</div>
<div class="t" id="t58" style="top:258.01px;font:normal bold 11.3px 'Liberation Sans';line-height:1;color:#000;left:655.6px;transform:scaleX(0.8887);transform-origin:left top;">Código: MIES-VIS-F001</div>
<div class="t" id="t59" style="top:282.01px;font:normal bold 11.3px 'Liberation Sans';line-height:1;color:#000;left:655.6px;transform:scaleX(0.9111);transform-origin:left top;">Fecha de vigencia del formato:</div>
<div class="t" id="t60" style="top:297.51px;font:normal bold 11.3px 'Liberation Sans';line-height:1;color:#000;left:655.6px;transform:scaleX(0.9152);transform-origin:left top;">2024</div>
<div class="t" id="t61" style="top:355.01px;font:normal bold 11.3px 'Liberation Sans';line-height:1;color:#000;left:655.6px;transform:scaleX(0.9274);transform-origin:left top;">Fecha de vigencia del formato: Mayo - 2024</div>
<div class="t" id="t62" style="top:335.61px;font:italic normal 14.67px 'Liberation Sans';line-height:1;color:#000;left:35px;transform:scaleX(0.9889);transform-origin:left top;">Santo Domingo,  27 de enero del 2025</div>
<div class="t" id="t63" style="top:376.00px;font:normal bold 14.67px 'Liberation Sans';line-height:1;color:#000;left:35px;">Señor/a</div>
<div class="t" id="t64" style="top:415.81px;font:normal bold 14.67px 'Liberation Sans';line-height:1;color:#000;left:34.5px;">Director/a Distrital - Coordinador/a Zonal</div>
<div class="t" id="t65" style="top:435.61px;font:normal bold 14.67px 'Liberation Sans';line-height:1;color:#000;left:34.5px;transform:scaleX(1.0371);transform-origin:left top;">Presente.-</div>
<div class="t" id="t66" style="top:480.00px;font:normal normal 14.67px 'Liberation Sans';line-height:1;color:#000;left:34.5px;transform:scaleX(0.9925);transform-origin:left top;">Por medio del presente solicito el _(primer)_ desembolso/pago según convenio y liquidación correspondiente al período Nro PD-</div>
<div class="t" id="t67" style="top:499.31px;font:normal normal 14.67px 'Liberation Sans';line-height:1;color:#000;left:34.5px;transform:scaleX(0.9866);transform-origin:left top;">04-23D01-26252-D del 2025, de acuerdo al siguiente detalle:</div>
<div class="a" style="left:32px;top:539px;width:844px;height:2px;background:#000;"></div>
<div class="a" style="left:32px;top:541px;width:844px;height:67px;background:#17375e;"></div>
<div class="a" style="left:32px;top:608px;width:844px;height:2px;background:#000;"></div>
<div class="a" style="left:182px;top:541px;width:2px;height:129px;background:#000;"></div>
<div class="a" style="left:293px;top:541px;width:2px;height:129px;background:#000;"></div>
<div class="a" style="left:439px;top:541px;width:2px;height:129px;background:#000;"></div>
<div class="a" style="left:565px;top:541px;width:1px;height:129px;background:#000;"></div>
<div class="a" style="left:651px;top:541px;width:2px;height:129px;background:#000;"></div>
<div class="a" style="left:760px;top:541px;width:1px;height:129px;background:#000;"></div>
<svg style="left:177px;top:541px;" width="6" height="6" viewBox="0 0 6 6"><path d="M0 0 H6 V6Z" fill="#ff0000"/></svg>
<div class="t" id="t68" style="top:570.00px;font:normal bold 11px 'Liberation Sans';line-height:1;color:#ffffff;left:-492px;width:1200px;text-align:center;transform:scaleX(0.9671);transform-origin:center top;">MODALIDAD</div>
<div class="t" id="t69" style="top:562.30px;font:normal bold 11px 'Liberation Sans';line-height:1;color:#ffffff;left:-361px;width:1200px;text-align:center;transform:scaleX(0.9348);transform-origin:center top;">ENTIDAD</div>
<div class="t" id="t70" style="top:577.00px;font:normal bold 11px 'Liberation Sans';line-height:1;color:#ffffff;left:-361px;width:1200px;text-align:center;transform:scaleX(0.9166);transform-origin:center top;">EJECUTORA</div>
<div class="t" id="t71" style="top:562.30px;font:normal bold 11px 'Liberation Sans';line-height:1;color:#ffffff;left:-232.5px;width:1200px;text-align:center;transform:scaleX(1.0280);transform-origin:center top;">Nº RUC DE LA</div>
<div class="t" id="t72" style="top:577.00px;font:normal bold 11px 'Liberation Sans';line-height:1;color:#ffffff;left:-232.5px;width:1200px;text-align:center;transform:scaleX(0.9517);transform-origin:center top;">ORGANIZACION</div>
<div class="t" id="t73" style="top:570.00px;font:normal bold 11px 'Liberation Sans';line-height:1;color:#ffffff;left:-97px;width:1200px;text-align:center;transform:scaleX(0.9027);transform-origin:center top;">NÚMERO DE UNIDADES</div>
<div class="t" id="t74" style="top:555.00px;font:normal bold 11px 'Liberation Sans';line-height:1;color:#ffffff;left:8.5px;width:1200px;text-align:center;transform:scaleX(0.9183);transform-origin:center top;">NOMBRE DE LA</div>
<div class="t" id="t75" style="top:570.00px;font:normal bold 11px 'Liberation Sans';line-height:1;color:#ffffff;left:8.5px;width:1200px;text-align:center;transform:scaleX(0.9534);transform-origin:center top;">INSTITUCION</div>
<div class="t" id="t76" style="top:585.00px;font:normal bold 11px 'Liberation Sans';line-height:1;color:#ffffff;left:8.5px;width:1200px;text-align:center;transform:scaleX(0.9140);transform-origin:center top;">FINANCIERA</div>
<div class="t" id="t77" style="top:562.30px;font:normal bold 11px 'Liberation Sans';line-height:1;color:#ffffff;left:106.5px;width:1200px;text-align:center;transform:scaleX(0.9404);transform-origin:center top;">TIPO Y NÚMERO DE</div>
<div class="t" id="t78" style="top:577.00px;font:normal bold 11px 'Liberation Sans';line-height:1;color:#ffffff;left:106.5px;width:1200px;text-align:center;transform:scaleX(0.8994);transform-origin:center top;">CUENTA BANCARIA</div>
<div class="t" id="t79" style="top:570.00px;font:normal bold 11px 'Liberation Sans';line-height:1;color:#ffffff;left:218px;width:1200px;text-align:center;transform:scaleX(0.9819);transform-origin:center top;">VALOR</div>
<div class="t" id="t80" style="top:616.00px;font:normal normal 11px 'Liberation Sans';line-height:1;color:#000;left:186px;transform:scaleX(0.9278);transform-origin:left top;">Fundación GOBIERNO</div>
<div class="t" id="t81" style="top:631.00px;font:normal normal 11px 'Liberation Sans';line-height:1;color:#000;left:186px;transform:scaleX(0.9263);transform-origin:left top;">AUTÓNOMO</div>
<div class="t" id="t82" style="top:646.00px;font:normal normal 11px 'Liberation Sans';line-height:1;color:#000;left:186px;transform:scaleX(0.9296);transform-origin:left top;">DESCENTRALIZADO</div>
<div class="t" id="t83" style="top:661.00px;font:normal normal 11px 'Liberation Sans';line-height:1;color:#000;left:186px;transform:scaleX(0.9404);transform-origin:left top;">PARROQUIAL RURAL</div>
<div class="t" id="t84" style="top:660.00px;font:normal normal 11px 'Liberation Sans';line-height:1;color:#000;left:-493.5px;width:1200px;text-align:center;transform:scaleX(0.9194);transform-origin:center top;">ATENCIÓN EN EL HOGAR Y</div>
<div class="t" id="t85" style="top:653.00px;font:normal normal 11px 'Liberation Sans';line-height:1;color:#000;left:8.5px;width:1200px;text-align:center;transform:scaleX(0.9369);transform-origin:center top;">BCE - BANCO</div>
<div class="t" id="t86" style="top:668.00px;font:normal normal 11px 'Liberation Sans';line-height:1;color:#000;left:8.5px;width:1200px;text-align:center;transform:scaleX(0.8839);transform-origin:center top;">CENTRAL DEL</div>
<div class="t" id="t87" style="top:644.61px;font:normal normal 11px 'Liberation Sans';line-height:1;color:#000;left:106.5px;width:1200px;text-align:center;transform:scaleX(0.9840);transform-origin:center top;">GAD PQ VALLE</div>
<div class="t" id="t88" style="top:659.41px;font:normal normal 11px 'Liberation Sans';line-height:1;color:#000;left:106.5px;width:1200px;text-align:center;transform:scaleX(0.9215);transform-origin:center top;">HERMOSO-23D01-</div>
<div class="t" id="t89" style="top:668.00px;font:normal normal 11px 'Liberation Sans';line-height:1;color:#000;left:300px;transform:scaleX(0.9305);transform-origin:left top;">1790000000001</div>
<div class="t" id="t90" style="top:668.00px;font:normal normal 11px 'Liberation Sans';line-height:1;color:#000;left:504px;transform:scaleX(0.9808);transform-origin:left top;">1</div>
<div class="t" id="t91" style="top:668.00px;font:normal normal 11px 'Liberation Sans';line-height:1;color:#000;left:798px;transform:scaleX(0.9808);transform-origin:left top;">5240.81</div>
<div class="a" style="left:651px;top:218px;width:225px;height:2px;background:#12845a;"></div>
<div class="a" style="left:651px;top:248px;width:225px;height:2px;background:#12845a;"></div>
<div class="a" style="left:651px;top:218px;width:2px;height:32px;background:#12845a;"></div>
<div class="a" style="left:874px;top:218px;width:2px;height:32px;background:#12845a;"></div>
<div class="a" style="left:872px;top:246px;width:5px;height:5px;background:#12845a;border:1px solid #fff"></div>
<div class="a" style="left:0px;top:670px;width:1309px;height:26px;background:#eeeeee;"></div>
<div class="a" style="left:0px;top:670px;width:1292px;height:1px;background:#dedede;"></div>
<div class="a" style="left:102px;top:670px;width:73px;height:24px;background:#ffffff;border-radius:0 0 6px 6px"></div>
<svg style="left:14px;top:678px;" width="11" height="10" viewBox="0 0 11 10"><path d="M0.8 0 V10 M9.8 0.6 L5.2 5 L9.8 9.4" fill="none" stroke="#9a9a9a" stroke-width="1.3"/></svg>
<svg style="left:37px;top:678px;" width="7" height="10" viewBox="0 0 7 10"><path d="M6 0.6 L1.4 5 L6 9.4" fill="none" stroke="#9a9a9a" stroke-width="1.3"/></svg>
<svg style="left:60px;top:678px;" width="7" height="10" viewBox="0 0 7 10"><path d="M1 0.6 L5.6 5 L1 9.4" fill="none" stroke="#333" stroke-width="1.4"/></svg>
<svg style="left:79px;top:678px;" width="11" height="10" viewBox="0 0 11 10"><path d="M1 0.6 L5.6 5 L1 9.4 M9.4 0 V10" fill="none" stroke="#333" stroke-width="1.5"/></svg>
<div class="t" id="t92" style="top:677.01px;font:normal normal 12.5px 'Liberation Sans';line-height:1;color:#12774a;left:-461.5px;width:1200px;text-align:center;transform:scaleX(0.8950);transform-origin:center top;font-weight:600;-webkit-text-stroke:0.25px #12774a;">ANEXO 1</div>
<div class="t" id="t93" style="top:677.01px;font:normal normal 12.5px 'Liberation Sans';line-height:1;color:#333;left:189.5px;transform:scaleX(0.8674);transform-origin:left top;">ANEXO 2</div>
<div class="t" id="t94" style="top:677.01px;font:normal normal 12.5px 'Liberation Sans';line-height:1;color:#333;left:266px;transform:scaleX(0.8877);transform-origin:left top;">ANEXO 3A</div>
<div class="t" id="t95" style="top:677.01px;font:normal normal 12.5px 'Liberation Sans';line-height:1;color:#333;left:349px;transform:scaleX(0.8717);transform-origin:left top;">ANEXO 3B</div>
<div class="t" id="t96" style="top:677.01px;font:normal normal 12.5px 'Liberation Sans';line-height:1;color:#333;left:430px;transform:scaleX(0.8858);transform-origin:left top;">ANEXO 4</div>
<div class="t" id="t97" style="top:677.01px;font:normal normal 12.5px 'Liberation Sans';line-height:1;color:#333;left:504px;transform:scaleX(0.8766);transform-origin:left top;">ANEXO 5</div>
<div class="t" id="t98" style="top:677.01px;font:normal normal 12.5px 'Liberation Sans';line-height:1;color:#333;left:578.5px;transform:scaleX(0.8877);transform-origin:left top;">ANEXO 6A</div>
<div class="t" id="t99" style="top:677.01px;font:normal normal 12.5px 'Liberation Sans';line-height:1;color:#333;left:648.5px;transform:scaleX(0.8637);transform-origin:left top;">ANEXO 6B</div>
<div class="a" style="left:252px;top:674px;width:1px;height:17px;background:#d6d6d6;"></div>
<div class="a" style="left:334px;top:674px;width:1px;height:17px;background:#d6d6d6;"></div>
<div class="a" style="left:416px;top:674px;width:1px;height:17px;background:#d6d6d6;"></div>
<div class="a" style="left:490px;top:674px;width:1px;height:17px;background:#d6d6d6;"></div>
<div class="a" style="left:564px;top:674px;width:1px;height:17px;background:#d6d6d6;"></div>
<div class="a" style="left:646px;top:674px;width:1px;height:17px;background:#d6d6d6;"></div>
<div class="a" style="left:702px;top:670px;width:8px;height:26px;background:#eeeeee;"></div>
<div class="a" style="left:702px;top:674px;width:1px;height:17px;background:#c6c6c6;"></div>
<div class="a" style="left:713.5px;top:682px;width:2px;height:2px;background:#333;border-radius:1px"></div>
<div class="a" style="left:719px;top:682px;width:2px;height:2px;background:#333;border-radius:1px"></div>
<div class="a" style="left:724.5px;top:682px;width:2px;height:2px;background:#333;border-radius:1px"></div>
<svg style="left:739px;top:679px;" width="10" height="10" viewBox="0 0 10 10"><path d="M5 0 V10 M0 5 H10" stroke="#222" stroke-width="1.6"/></svg>
<div class="a" style="left:770px;top:676px;width:1px;height:14px;background:#aaa;"></div>
<svg style="left:784px;top:680px;" width="5" height="7" viewBox="0 0 5 7"><path d="M4.6 0.4 V6.6 L0.4 3.5Z" fill="#777"/></svg>
<div class="a" style="left:798px;top:679px;width:462px;height:8px;background:#d0d0d0;border-radius:4px"></div>
<svg style="left:1271px;top:680px;" width="5" height="7" viewBox="0 0 5 7"><path d="M0.4 0.4 V6.6 L4.6 3.5Z" fill="#777"/></svg>
<div class="a" style="left:1289px;top:676px;width:1px;height:12px;background:#aaa;"></div>
<div class="a" style="left:1309px;top:620px;width:1px;height:76px;background:#d6d6d6;"></div>
<div class="a" style="left:0px;top:696px;width:1366px;height:1px;background:#d6d6d6;"></div>
<div class="a" style="left:0px;top:697px;width:1366px;height:23px;background:#eeeeee;"></div>
<svg style="left:17px;top:702px;" width="14" height="13" viewBox="0 0 14 13"><path d="M2.6 0.6 H13.4 V11 M0.6 2.6 H11.4 V12.4 H0.6 Z" fill="none" stroke="#3a3a3a" stroke-width="1.1"/><path d="M4 5.4 V9.2 H7.6" fill="none" stroke="#3a3a3a" stroke-width="1.1"/></svg>
<svg style="left:48px;top:701px;" width="16" height="14" viewBox="0 0 16 14"><text x="0.6" y="6" font-family="Liberation Sans" font-size="6.4" font-weight="bold" fill="#3a3a3a" textLength="7.4" lengthAdjust="spacingAndGlyphs">VB</text><path d="M9.6 1.4 H14.2 V4.6 H11.8 M11.8 1.4 V11.6 C11.8 12.2 11.4 12.6 10.8 12.6 H3.4 C2.8 12.6 2.4 12.2 2.4 11.6 V10.6 C2.4 10 2.8 9.6 3.4 9.6 H10.4 M3.4 7.4 V9.6" fill="none" stroke="#3a3a3a" stroke-width="1.1" stroke-linejoin="round"/></svg>
<svg style="left:82px;top:702px;" width="14" height="13" viewBox="0 0 14 13"><path d="M13 0.6 H0.6 V12.4 H5" fill="none" stroke="#3a3a3a" stroke-width="1.1"/><path d="M7 5 H13.4 M7 8 H13.4 M7 11 H13.4" stroke="#3a3a3a" stroke-width="1.1"/></svg>
<div class="t" id="t100" style="top:702.01px;font:normal normal 12.5px 'Liberation Sans';line-height:1;color:#333;left:112.5px;transform:scaleX(0.9668);transform-origin:left top;">Promedio=0</div>
<div class="t" id="t101" style="top:702.01px;font:normal normal 12.5px 'Liberation Sans';line-height:1;color:#333;left:192.5px;transform:scaleX(0.9368);transform-origin:left top;">Contar=1</div>
<div class="t" id="t102" style="top:702.01px;font:normal normal 12.5px 'Liberation Sans';line-height:1;color:#333;left:256px;transform:scaleX(0.9381);transform-origin:left top;">Suma=0</div>
<svg style="left:818px;top:700px;" width="17" height="17" viewBox="0 0 17 17"><path d="M0.6 0.6 H15 V7 M0.6 0.6 V15.4 H8 M0.6 5 H15 M0.6 10 H8 M5 0.6 V15.4" fill="none" stroke="#3a3a3a" stroke-width="1.1"/><circle cx="12.6" cy="12.6" r="3.2" fill="none" stroke="#3a3a3a" stroke-width="1.1"/><circle cx="12.6" cy="12.6" r="1" fill="#3a3a3a"/></svg>
<svg style="left:853px;top:700px;" width="16" height="16" viewBox="0 0 16 16"><path d="M5.6 1 H10.4 V5.6 H15 V10.4 H10.4 V15 H5.6 V10.4 H1 V5.6 H5.6 Z" fill="none" stroke="#3a3a3a" stroke-width="1.1" stroke-linejoin="round"/><rect x="6.4" y="6.4" width="3.2" height="3.2" fill="none" stroke="#3a3a3a" stroke-width="1"/></svg>
<svg style="left:874px;top:706px;" width="6" height="4" viewBox="0 0 6 4"><path d="M0.6 0.6 L3 3 L5.4 0.6" fill="none" stroke="#3a3a3a" stroke-width="1.3"/></svg>
<div class="a" style="left:894px;top:700px;width:1px;height:15px;background:#cfcfcf;"></div>
<svg style="left:910px;top:700px;" width="14" height="16" viewBox="0 0 14 16"><path d="M4.6 0.6 H13.4 V15.4 H4.6 V11.8 M4.6 4.2 V0.6" fill="none" stroke="#3a3a3a" stroke-width="1.1"/><path d="M0 8 H9 M6.2 5.2 L9 8 L6.2 10.8" fill="none" stroke="#3a3a3a" stroke-width="1.1"/><path d="M7.6 13.4 H10.4" stroke="#3a3a3a" stroke-width="1"/></svg>
<div class="a" style="left:935px;top:696px;width:24px;height:24px;background:#d9d9d9;border-radius:3px"></div>
<svg style="left:941px;top:701px;" width="14" height="14" viewBox="0 0 14 14"><rect x="0.6" y="0.6" width="12.8" height="12.8" fill="none" stroke="#3a3a3a" stroke-width="1.1"/><path d="M0.6 4.4 H13.4 M4.4 4.4 V13.4" stroke="#3a3a3a" stroke-width="1.1"/></svg>
<svg style="left:972px;top:701px;" width="14" height="14" viewBox="0 0 14 14"><rect x="0.6" y="0.6" width="12.8" height="12.8" fill="none" stroke="#3a3a3a" stroke-width="1.1"/><path d="M7 0.6 V13.4" stroke="#3a3a3a" stroke-width="1.1"/></svg>
<svg style="left:1004px;top:701px;" width="15" height="14" viewBox="0 0 15 14"><path d="M0.6 13.4 H14.4 M3.2 10.6 H12 V0.6 H0.6 V10.6" fill="none" stroke="#3a3a3a" stroke-width="1.1"/></svg>
<svg style="left:1037px;top:702px;" width="16" height="11" viewBox="0 0 16 11"><path d="M0.6 5.5 C4 -0.8 12 -0.8 15.4 5.5 C12 11.8 4 11.8 0.6 5.5Z" fill="none" stroke="#3a3a3a" stroke-width="1.1"/><circle cx="8" cy="5.5" r="2.2" fill="none" stroke="#3a3a3a" stroke-width="1.1"/></svg>
<svg style="left:1057px;top:706px;" width="6" height="4" viewBox="0 0 6 4"><path d="M0.6 0.6 L3 3 L5.4 0.6" fill="none" stroke="#3a3a3a" stroke-width="1.3"/></svg>
<div class="a" style="left:1079px;top:700px;width:1px;height:15px;background:#cfcfcf;"></div>
<div class="t" id="t103" style="top:701.51px;font:normal normal 12.5px 'Liberation Sans';line-height:1;color:#333;left:1095.5px;transform:scaleX(0.8602);transform-origin:left top;">100%</div>
<svg style="left:1134px;top:706px;" width="7" height="4" viewBox="0 0 7 4"><path d="M0.6 0.6 L3.5 3.2 L6.4 0.6" fill="none" stroke="#3a3a3a" stroke-width="1.3"/></svg>
<div class="a" style="left:1158px;top:706.5px;width:12px;height:2px;background:#222;"></div>
<div class="a" style="left:1184px;top:707px;width:106px;height:2px;background:#b8b8b8;border-radius:1px"></div>
<div class="a" style="left:1184px;top:707px;width:53px;height:2px;background:#1f5fd8;border-radius:1px"></div>
<svg style="left:1231px;top:701.5px;" width="13" height="13" viewBox="0 0 13 13"><circle cx="6.5" cy="6.5" r="5.6" fill="#fff" stroke="#d6d6d6" stroke-width="1"/><circle cx="6.5" cy="6.5" r="3" fill="#8a8a8a"/></svg>
<svg style="left:1304px;top:702.5px;" width="12" height="12" viewBox="0 0 12 12"><path d="M6 0 V12 M0 6 H12" stroke="#222" stroke-width="2"/></svg>
<svg style="left:1336px;top:701px;" width="14" height="13" viewBox="0 0 14 13"><path d="M0.6 4 V0.6 H4 M10 0.6 H13.4 V4 M13.4 9 V12.4 H10 M4 12.4 H0.6 V9 M4.5 8.5 L1.5 11.5 M9.5 4 L12.5 1" fill="none" stroke="#3a3a3a" stroke-width="1.2"/></svg>
<div class="a" style="left:0px;top:720px;width:1366px;height:1px;background:#3d3542;"></div>
</body></html>
